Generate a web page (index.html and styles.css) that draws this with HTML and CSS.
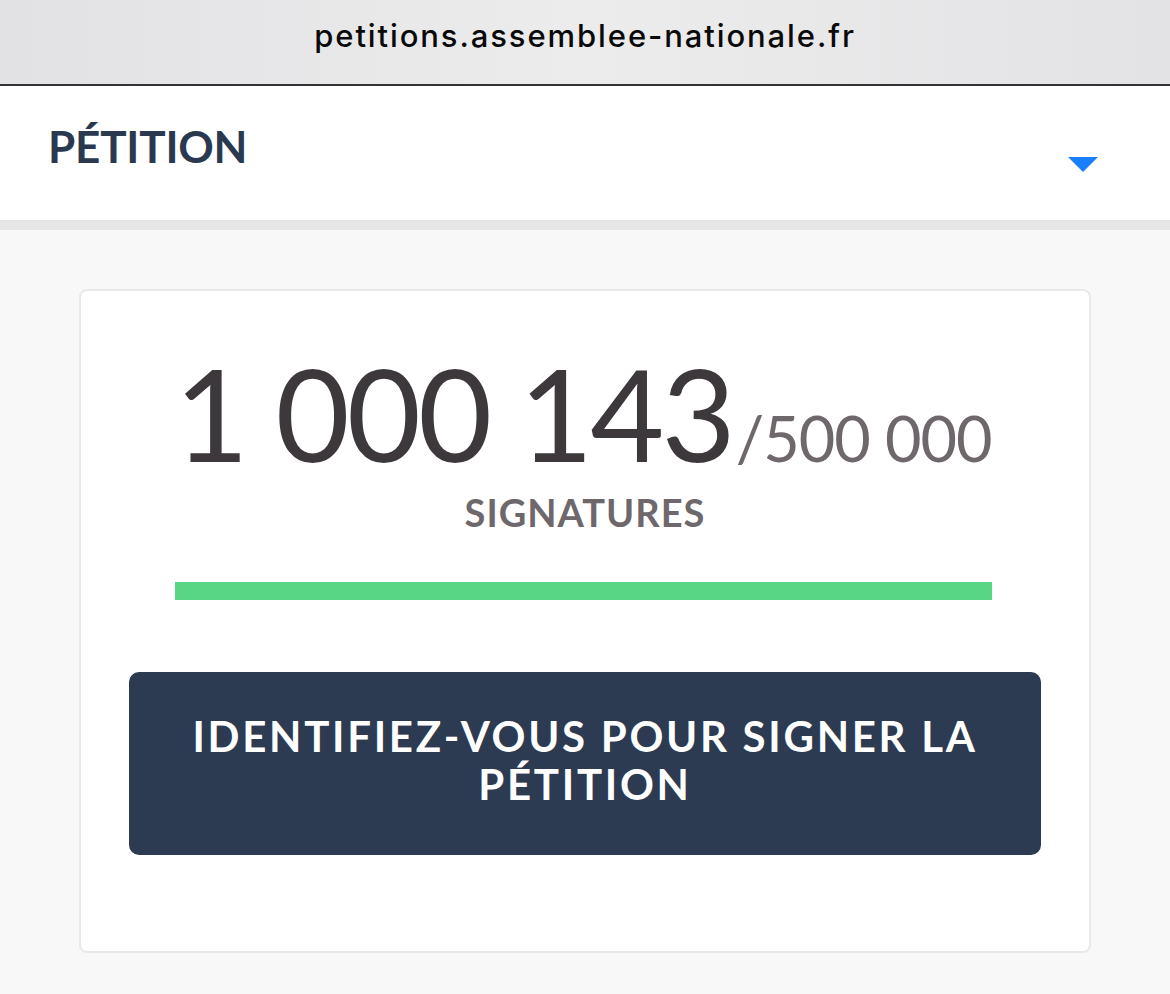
FILE: index.html
```html
<!DOCTYPE html>
<html lang="fr">
<head>
<meta charset="utf-8">
<title>Pétition</title>
<link rel="stylesheet" href="styles.css">
</head>
<body>
<div class="urlbar"><span class="url">petitions.assemblee-nationale.fr</span></div>
<header class="head">
  <h1 class="title">PÉTITION</h1>
  <svg class="caret" width="30" height="15" viewBox="0 0 30 15"><polygon points="0,0 30,0 15,15" fill="#1a7ffb"/></svg>
</header>
<div class="sep"></div>
<main class="page">
  <section class="card">
    <div class="count"><span class="big">1 000 143</span><span class="goal">/500 000</span></div>
    <div class="label">SIGNATURES</div>
    <div class="bar"><div class="fill" style="width:100%"></div></div>
    <button class="cta">IDENTIFIEZ-VOUS POUR SIGNER LA PÉTITION</button>
  </section>
</main>
</body>
</html>
```
FILE: styles.css
```css
html, body { margin: 0; padding: 0; }
body {
  width: 1170px;
  height: 994px;
  overflow: hidden;
  background: #f8f8f8;
  font-family: Lato, "Noto Sans", sans-serif;
}
.urlbar {
  background: linear-gradient(90deg, #e2e2e4 0%, #ececed 50%, #e3e3e5 100%);
  border-bottom: 2px solid #333335;
  box-sizing: border-box;
  height: 86px;
  display: flex;
  justify-content: center;
  padding-top: 17px;
}
.url {
  font-family: Inter, "Open Sans", sans-serif;
  font-weight: 500;
  font-size: 31px;
  line-height: 38px;
  color: #0a0a0a;
  letter-spacing: 1.9px;
}
.head {
  height: 134px;
  background: #fff;
  display: flex;
  justify-content: space-between;
  padding: 0 72px 0 48px;
  box-sizing: border-box;
}
.title {
  margin: 0;
  padding-top: 35px;
  font-size: 44px;
  font-weight: 700;
  color: #2b3950;
  letter-spacing: -0.2px;
  line-height: 50px;
}
.caret { margin-top: 71px; }
.sep { height: 10px; background: #e6e6e6; }
.page { padding: 59px 79px 0 79px; }
.card {
  background: #fff;
  border: 2px solid #e8e8e8;
  border-radius: 8px;
  height: 664px;
  box-sizing: border-box;
  display: flex;
  flex-direction: column;
  align-items: center;
  padding-top: 58px;
}
.count {
  display: flex;
  align-items: baseline;
  color: #3d383b;
  line-height: 1;
  margin-right: 4px;
}
.big {
  font-size: 128px;
  font-weight: 400;
  letter-spacing: -3px;
}
.goal {
  font-size: 63px;
  color: #6e676c;
  font-weight: 400;
  letter-spacing: -1px;
  margin-left: 3px;
}
.label {
  font-size: 38px;
  font-weight: 700;
  color: #6e676c;
  letter-spacing: 1px;
  margin-top: 12px;
}
.bar {
  width: 817px;
  height: 18px;
  margin-top: 47px;
  margin-right: 3px;
  background: #e6e6e6;
}
.fill { height: 100%; background: #58d685; }
.cta {
  margin-top: 72px;
  width: 912px;
  height: 183px;
  background: #2c3a52;
  border: 0;
  border-radius: 10px;
  color: #fff;
  font-family: Lato, "Noto Sans", sans-serif;
  font-weight: 700;
  font-size: 42px;
  letter-spacing: 2.7px;
  line-height: 48px;
  padding: 0 30px 8px;
}
```
